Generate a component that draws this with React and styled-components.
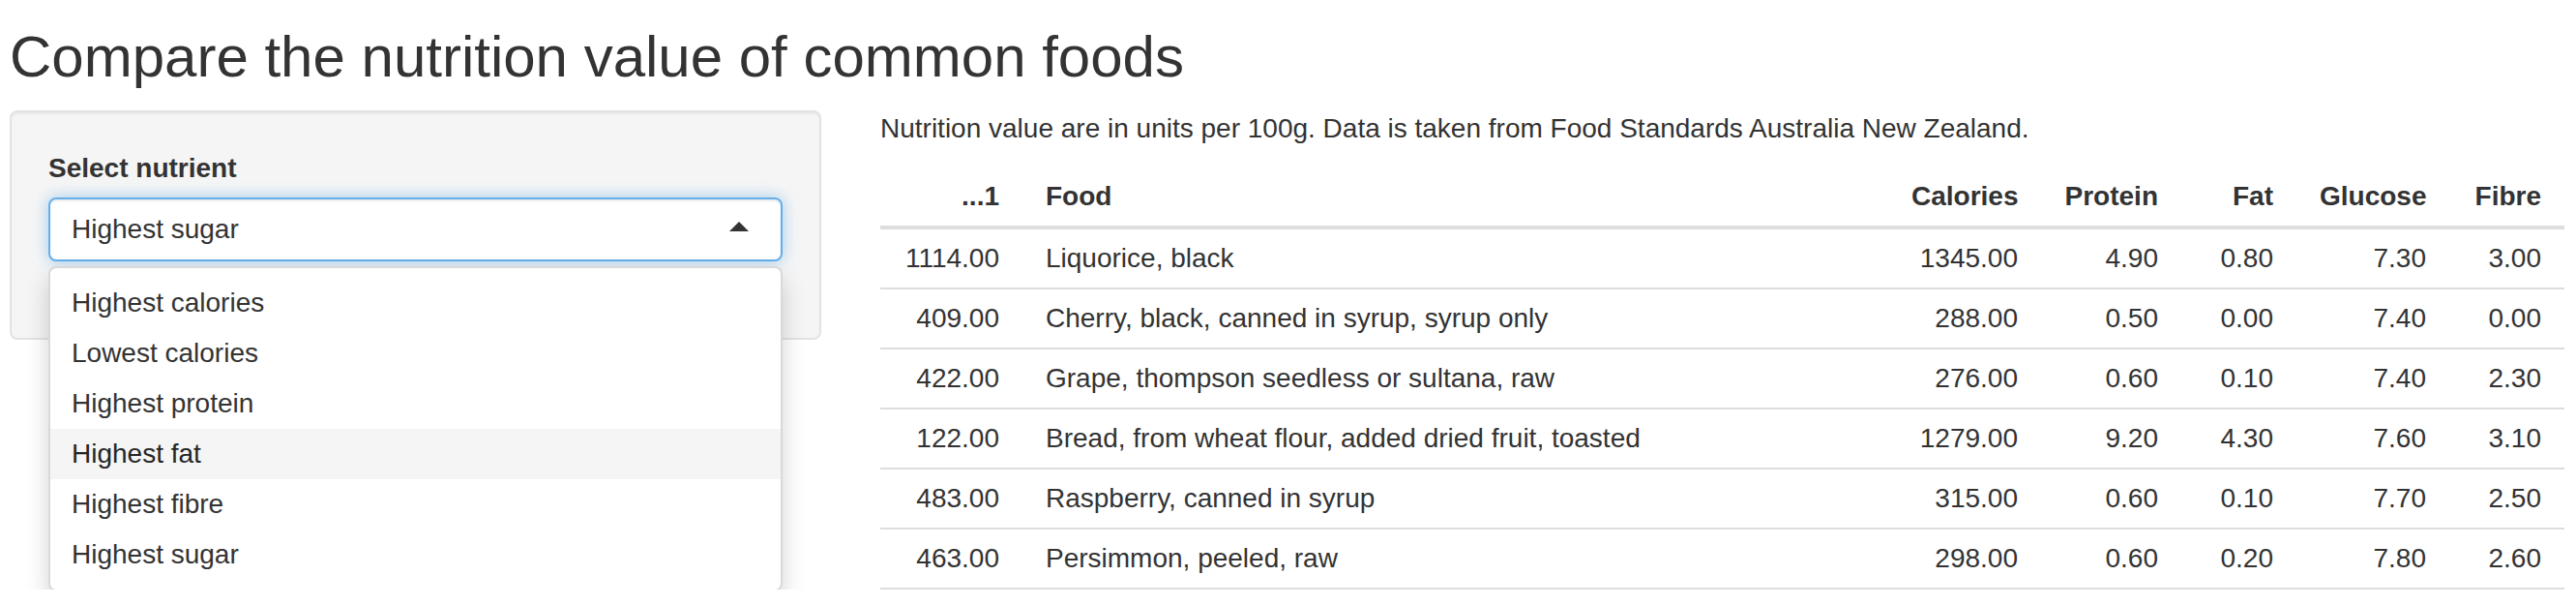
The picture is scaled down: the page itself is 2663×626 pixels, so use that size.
import React from "react";
import styled, { createGlobalStyle } from "styled-components";

const GlobalStyle = createGlobalStyle`
  html, body {
    margin: 0;
    padding: 0;
    background: #ffffff;
  }
  body {
    font-family: "Liberation Sans", Arial, Helvetica, sans-serif;
    font-size: 28px;
    line-height: 40px;
    color: #333333;
  }
  * { box-sizing: border-box; }
`;

const Page = styled.div`
  padding: 0 12px 0 10px;
`;

const Title = styled.h2`
  margin: 26px 0 22px;
  font-size: 60px;
  line-height: 66px;
  font-weight: 500;
  color: #333333;
`;

const Layout = styled.div`
  display: grid;
  grid-template-columns: 839px 1741px;
  column-gap: 61px;
  align-items: start;
`;

const Well = styled.div`
  background: #f5f5f5;
  border: 2px solid #e3e3e3;
  border-radius: 8px;
  box-shadow: inset 0 2px 2px rgba(0, 0, 0, 0.05);
  padding: 38px;
`;

const FormGroup = styled.div`
  display: flex;
  flex-direction: column;
  margin-bottom: 41px;
`;

const Label = styled.label`
  font-weight: 700;
  margin-bottom: 10px;
`;

const SelectWrap = styled.div`
  position: relative;
`;

const SelectBox = styled.div`
  height: 66px;
  display: flex;
  align-items: center;
  justify-content: space-between;
  padding: 0 33px 0 22px;
  background: #ffffff;
  border: 2px solid #66afe9;
  border-radius: 8px;
  box-shadow: inset 0 2px 2px rgba(0, 0, 0, 0.075), 0 0 16px rgba(102, 175, 233, 0.6);
  color: #333333;
`;

const Caret = styled.span`
  width: 0;
  height: 0;
  border-style: solid;
  border-width: 0 10px 10px 10px;
  border-color: transparent transparent #333333 transparent;
  margin-bottom: 6px;
`;

const Dropdown = styled.div`
  position: absolute;
  top: calc(100% + 5px);
  left: 0;
  right: 0;
  z-index: 10;
  background: #ffffff;
  border: 2px solid rgba(0, 0, 0, 0.15);
  border-radius: 8px;
  box-shadow: 0 12px 24px rgba(0, 0, 0, 0.175);
  padding: 10px 0;
`;

const Option = styled.div`
  padding: 6px 22px;
  line-height: 40px;
  color: ${(p) => (p.$active ? "#262626" : "#333333")};
  background: ${(p) => (p.$active ? "#f5f5f5" : "transparent")};
`;

const Main = styled.div`
  display: flex;
  flex-direction: column;
`;

const Intro = styled.p`
  margin: -1px 0 20px;
`;

const Table = styled.table`
  width: 1741px;
  table-layout: fixed;
  border-collapse: collapse;
  border-spacing: 0;
`;

const Col = styled.col`
  width: ${(p) => (p.$w ? `${p.$w}px` : "auto")};
`;

const Th = styled.th`
  padding: 10px 24px;
  line-height: 40px;
  font-weight: 700;
  text-align: ${(p) => p.$align || "left"};
  border-bottom: 4px solid #dddddd;
  white-space: nowrap;
`;

const Td = styled.td`
  padding: 10px 24px;
  line-height: 40px;
  text-align: ${(p) => p.$align || "left"};
  border-top: 2px solid #dddddd;
  white-space: nowrap;
`;

const Row = styled.tr`
  &:last-child td {
    border-bottom: 2px solid #dddddd;
  }
`;

const options = [
  "Highest calories",
  "Lowest calories",
  "Highest protein",
  "Highest fat",
  "Highest fibre",
  "Highest sugar",
];

const columns = [
  { key: "id", label: "...1", align: "right", w: 147 },
  { key: "food", label: "Food", align: "left" },
  { key: "cal", label: "Calories", align: "right", w: 158 },
  { key: "protein", label: "Protein", align: "right", w: 145 },
  { key: "fat", label: "Fat", align: "right", w: 119 },
  { key: "glucose", label: "Glucose", align: "right", w: 158 },
  { key: "fibre", label: "Fibre", align: "right", w: 119 },
];

const rows = [
  ["1114.00", "Liquorice, black", "1345.00", "4.90", "0.80", "7.30", "3.00"],
  ["409.00", "Cherry, black, canned in syrup, syrup only", "288.00", "0.50", "0.00", "7.40", "0.00"],
  ["422.00", "Grape, thompson seedless or sultana, raw", "276.00", "0.60", "0.10", "7.40", "2.30"],
  ["122.00", "Bread, from wheat flour, added dried fruit, toasted", "1279.00", "9.20", "4.30", "7.60", "3.10"],
  ["483.00", "Raspberry, canned in syrup", "315.00", "0.60", "0.10", "7.70", "2.50"],
  ["463.00", "Persimmon, peeled, raw", "298.00", "0.60", "0.20", "7.80", "2.60"],
];

export default function App() {
  return (
    <>
      <GlobalStyle />
      <Page>
        <Title>Compare the nutrition value of common foods</Title>
        <Layout>
          <Well>
            <FormGroup>
              <Label>Select nutrient</Label>
              <SelectWrap>
                <SelectBox>
                  <span>Highest sugar</span>
                  <Caret />
                </SelectBox>
                <Dropdown>
                  {options.map((o) => (
                    <Option key={o} $active={o === "Highest fat"}>
                      {o}
                    </Option>
                  ))}
                </Dropdown>
              </SelectWrap>
            </FormGroup>
          </Well>
          <Main>
            <Intro>
              Nutrition value are in units per 100g. Data is taken from Food Standards Australia New Zealand.
            </Intro>
            <Table>
              <colgroup>
                {columns.map((c) => (
                  <Col key={c.key} $w={c.w} />
                ))}
              </colgroup>
              <thead>
                <tr>
                  {columns.map((c) => (
                    <Th key={c.key} $align={c.align}>
                      {c.label}
                    </Th>
                  ))}
                </tr>
              </thead>
              <tbody>
                {rows.map((r, i) => (
                  <Row key={i}>
                    {r.map((v, j) => (
                      <Td key={j} $align={columns[j].align}>
                        {v}
                      </Td>
                    ))}
                  </Row>
                ))}
              </tbody>
            </Table>
          </Main>
        </Layout>
      </Page>
    </>
  );
}
